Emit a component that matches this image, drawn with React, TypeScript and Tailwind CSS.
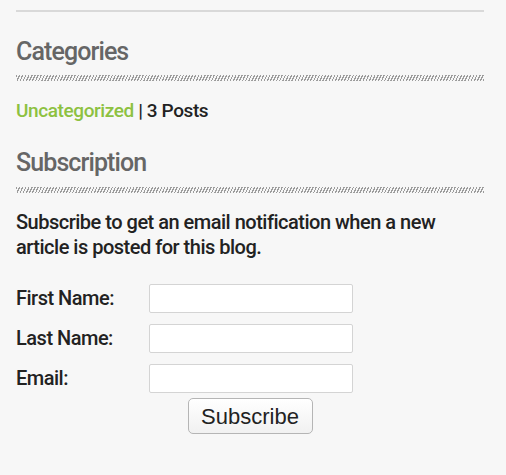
export default function App() {
  const hatch =
    "h-[6px] bg-[repeating-linear-gradient(115deg,#9c9c9c_0px,#9c9c9c_1.2px,transparent_1.2px,transparent_2.8px)]";

  return (
    <div className="min-h-[475px] w-[506px] bg-[#f7f7f7] font-['Roboto',sans-serif] text-[#222]">
      <div className="w-[500px] px-4 pt-[10px] pb-10">
        <div className="h-[2px] bg-[#d9d9d9]" />

        <h2 className="mt-[26px] text-[25px] leading-[28px] font-medium tracking-[-0.9px] text-[#666]">Categories</h2>
        <div className={`mt-[9px] ${hatch}`} />
        <p className="mt-[18px] text-[19px] leading-[24px] tracking-[-0.4px] font-medium">
          <a href="#" className="text-[#8dc141]">Uncategorized</a> | 3 Posts
        </p>

        <h2 className="mt-[26px] text-[25px] leading-[28px] font-medium tracking-[-0.9px] text-[#666]">Subscription</h2>
        <div className={`mt-[10px] ${hatch}`} />
        <p className="mt-[17px] text-[20px] leading-[25px] tracking-[-0.5px] font-medium">
          Subscribe to get an email notification when a new article is posted for this blog.
        </p>

        <form className="mt-[23px]">
          <div className="grid grid-cols-[133px_204px] gap-y-[10px] items-center">
            <label className="text-[20px] tracking-[-0.5px] font-medium">First Name:</label>
            <input className="h-[29px] border border-[#d4d4d4] bg-white rounded-[2px]" />
            <label className="text-[20px] tracking-[-0.5px] font-medium">Last Name:</label>
            <input className="h-[29px] border border-[#d4d4d4] bg-white rounded-[2px]" />
            <label className="text-[20px] tracking-[-0.5px] font-medium">Email:</label>
            <input className="h-[29px] border border-[#d4d4d4] bg-white rounded-[2px]" />
          </div>
          <div className="mt-[5px] flex justify-center">
            <button
              type="button"
              className="h-[36px] w-[125px] rounded-[5px] border border-[#b5b5b5] bg-[linear-gradient(#ffffff,#f1f1f1)] font-['Liberation_Sans',Arial,sans-serif] text-[22px] text-[#222]"
            >
              Subscribe
            </button>
          </div>
        </form>
      </div>
    </div>
  );
}
